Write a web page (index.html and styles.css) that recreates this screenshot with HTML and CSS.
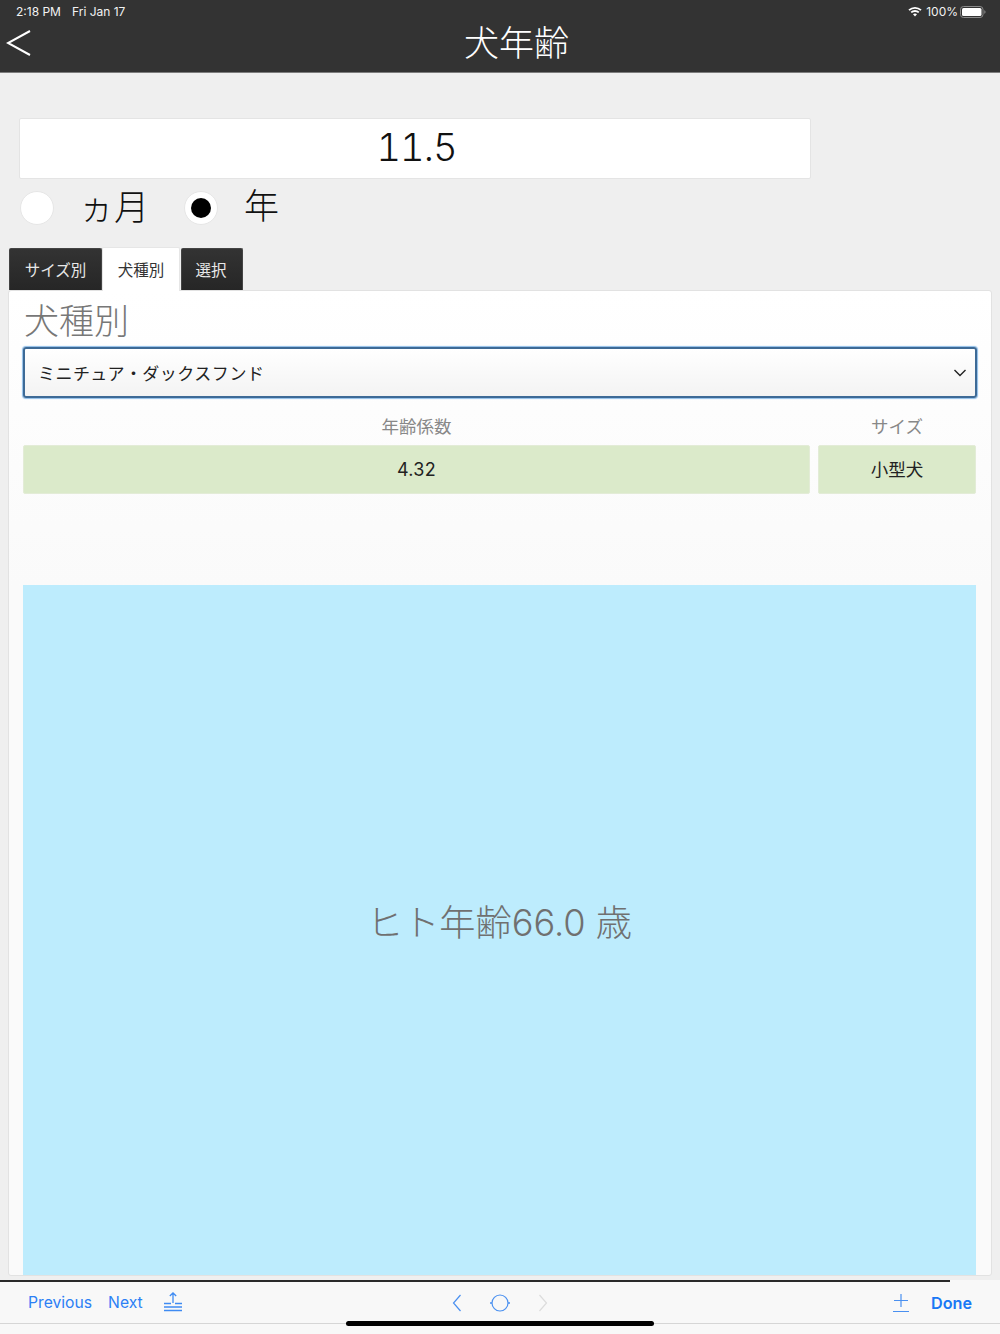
FILE: index.html
```html
<!DOCTYPE html>
<html lang="ja">
<head>
<meta charset="utf-8">
<title>犬年齢</title>
<link rel="stylesheet" href="styles.css">
</head>
<body>
<div class="screen">
  <header class="header">
    <div class="status">
      <div class="status-left"><span>2:18 PM</span><span>Fri Jan 17</span></div>
      <div class="status-right">
        <svg class="wifi" width="14" height="11" viewBox="0 0 14 11"><path d="M1 4.200C4.500 1 9.500 1 13 4.200" fill="none" stroke="#fff" stroke-width="1.800"/><path d="M3.200 6.400C5.300 4.500 8.700 4.500 10.800 6.400" fill="none" stroke="#fff" stroke-width="1.800"/><path d="M5 8.300C6.200 7.300 7.800 7.300 9 8.300L7 10.500Z" fill="#fff"/></svg>
        <span>100%</span>
        <svg class="battery" width="26" height="12" viewBox="0 0 26 12"><rect x="0.500" y="0.500" width="22.500" height="11" rx="3" fill="none" stroke="#8a8a8a"/><rect x="2" y="2" width="19.500" height="8" rx="1.500" fill="#fff"/><path d="M24.300 4.300c.9.300 1.200 1 1.200 1.700s-.3 1.400-1.200 1.700z" fill="#8a8a8a"/></svg>
      </div>
    </div>
    <div class="navbar">
      <svg class="back" width="25" height="26" viewBox="0 0 25 26"><path d="M24 1L2 13l22 12" fill="none" stroke="#fff" stroke-width="2"/></svg>
      <h1 class="title">犬年齢</h1>
    </div>
  </header>

  <main class="main">
    <div class="value-box">11.5</div>
    <div class="radios">
      <span class="radio"></span>
      <span class="radio-label radio-label-month"><span class="ka">ヵ</span>月</span>
      <span class="radio radio-on"></span>
      <span class="radio-label">年</span>
    </div>
    <nav class="tabs">
      <span class="tab tab-size">サイズ別</span>
      <span class="tab tab-active">犬種別</span>
      <span class="tab tab-select">選択</span>
    </nav>
    <section class="panel">
      <h2 class="panel-title">犬種別</h2>
      <div class="select">
        <span>ミニチュア・ダックスフンド</span>
        <svg width="14" height="8" viewBox="0 0 14 8"><path d="M1.500 1l5.500 5.500L12.500 1" fill="none" stroke="#222" stroke-width="1.400"/></svg>
      </div>
      <div class="stats">
        <div class="stat-label">年齢係数</div>
        <div class="stat-label">サイズ</div>
        <div class="stat-value stat-number">4.32</div>
        <div class="stat-value">小型犬</div>
      </div>
      <div class="result">ヒト年齢66.0 歳</div>
    </section>
  </main>

  <footer class="toolbar">
    <div class="tool-group tool-left">
      <span class="tool-link">Previous</span>
      <span class="tool-link">Next</span>
      <svg width="20" height="20" viewBox="0 0 20 20"><path d="M10 1V11M6.800 4L10 1l3.200 3M1 11.500h7M12 11.500h7M1 15h18M1 18.500h18" fill="none" stroke="#3f8bf2" stroke-width="1.300"/></svg>
    </div>
    <div class="tool-group tool-center">
      <svg width="10" height="18" viewBox="0 0 10 18"><path d="M8.500 1L1.500 9l7 8" fill="none" stroke="#4a90f0" stroke-width="1.200"/></svg>
      <svg width="22" height="18" viewBox="0 0 22 18"><circle cx="11" cy="9" r="8" fill="none" stroke="#4a90f0" stroke-width="1.200"/><path d="M1 9h2M19 9h2" stroke="#4a90f0" stroke-width="1.600"/></svg>
      <svg width="10" height="18" viewBox="0 0 10 18"><path d="M1.500 1l7 8-7 8" fill="none" stroke="#dcdcdc" stroke-width="1.200"/></svg>
    </div>
    <div class="tool-group tool-right">
      <svg width="16" height="20" viewBox="0 0 16 20"><path d="M8 1v13M1 7.500h14M0 18.500h16" fill="none" stroke="#4a90f0" stroke-width="1.200"/></svg>
      <span class="tool-done">Done</span>
    </div>
  </footer>
  <div class="home-indicator"></div>
</div>
</body>
</html>
```

FILE: styles.css
```css
* {
  box-sizing: border-box;
}

html,
body {
  margin: 0;
  padding: 0;
}

body {
  background: #efefef;
  font-family: Inter, "Noto Sans CJK JP", sans-serif;
}

.screen {
  position: relative;
  width: 1000px;
  height: 1334px;
  overflow: hidden;
  display: flex;
  flex-direction: column;
}

.header {
  height: 73px;
  flex: none;
  background: #333;
  border-bottom: 1px solid #7d7d7d;
  color: #fff;
}

.status {
  height: 23px;
  display: flex;
  justify-content: space-between;
  align-items: center;
  padding: 0 14px 0 16px;
  font-size: 12px;
  color: #f2f2f2;
}

.status-left {
  display: flex;
  gap: 11px;
}

.status-right {
  display: flex;
  align-items: center;
  gap: 4px;
}

.status-right .battery {
  margin-left: -2px;
}

.navbar {
  height: 48px;
  display: flex;
  align-items: center;
  padding-left: 6px;
  position: relative;
}

.back {
  flex: none;
  margin-top: -8px;
}

.title {
  margin: -9px 0 0 0;
  font-size: 35px;
  font-weight: 300;
  line-height: 48px;
  width: 100%;
  text-align: center;
  padding-left: 2px;
}

.main {
  flex: 1;
  min-height: 0;
  padding: 45px 8px 0;
  display: flex;
  flex-direction: column;
}

.value-box {
  width: 792px;
  height: 61px;
  margin-left: 11px;
  padding: 0 0 4px 3px;
  background: #fff;
  border: 1px solid #e4e4e4;
  border-radius: 2px;
  font-size: 38px;
  font-weight: 300;
  font-feature-settings: "tnum";
  color: #111;
  display: flex;
  align-items: center;
  justify-content: center;
  letter-spacing: -1px;
}

.radios {
  display: flex;
  align-items: center;
  height: 35px;
  margin: 11px 0 0 12px;
}

.radio {
  width: 34px;
  height: 34px;
  border-radius: 50%;
  background: #fff;
  border: 1px solid #e6e6e6;
  flex: none;
  display: flex;
  align-items: center;
  justify-content: center;
}

.radio-on::after {
  content: "";
  width: 20px;
  height: 20px;
  border-radius: 50%;
  background: #000;
}

.radio-label {
  font-size: 35px;
  font-weight: 300;
  color: #111;
  line-height: 35px;
  margin-top: -3px;
  margin-left: 26px;
}

.radio-label-month {
  width: 105px;
  margin-top: -1px;
  margin-left: 25px;
  white-space: nowrap;
}

.ka {
  font-size: 35px;
}

.tabs {
  display: flex;
  height: 42px;
  margin: 23px 0 0 1px;
  align-items: flex-end;
  position: relative;
  z-index: 1;
}

.tab {
  height: 42px;
  padding-bottom: 1px;
  background: linear-gradient(#333, #262626);
  color: #e8e8e8;
  font-size: 15.500px;
  display: flex;
  align-items: center;
  justify-content: center;
  border-radius: 2px 2px 0 0;
  border: 1px solid #444;
  border-bottom: 0;
}

.tab-size {
  width: 93px;
}

.tab-active {
  width: 78px;
  height: 44px;
  margin: 0 1px -1px 0;
  background: #fff;
  color: #333;
  border: 1px solid #e6e6e6;
  border-bottom: 0;
}

.tab-select {
  width: 62px;
  padding-right: 2px;
}

.panel {
  height: 986px;
  background: linear-gradient(#fff, #fafafa 30%);
  border: 1px solid #e2e2e2;
  border-radius: 3px;
  padding: 0 15px 0 14px;
  display: flex;
  flex-direction: column;
  overflow: hidden;
}

.panel-title {
  margin: 9px 0 0 1px;
  height: 47px;
  font-size: 35px;
  font-weight: 300;
  line-height: 42px;
  color: #777;
}

.select {
  height: 51px;
  margin-right: -1px;
  border: 2px solid #3d6a96;
  border-radius: 3px;
  box-shadow: 0 0 1px 1px #8ebde8;
  background: linear-gradient(#fff, #f3f3f3);
  display: flex;
  align-items: center;
  justify-content: space-between;
  padding: 0 8px 0 13px;
  font-size: 17px;
  color: #222;
  letter-spacing: 0.450px;
}

.stats {
  display: grid;
  grid-template-columns: 787px 158px;
  column-gap: 8px;
  grid-template-rows: 47px 49px;
}

.stat-label {
  display: flex;
  align-items: center;
  justify-content: center;
  padding-top: 7px;
  font-size: 17.500px;
  color: #888;
}

.stat-value {
  display: flex;
  align-items: center;
  justify-content: center;
  background: #dbeaca;
  border: 1px solid #e3ecd7;
  border-radius: 2px;
  font-size: 17.500px;
  line-height: 20px;
  color: #222;
}

.stat-number {
  font-size: 18px;
  letter-spacing: 0.300px;
}

.result {
  flex: 1;
  margin-top: 91px;
  background: #bdecfd;
  color: #707070;
  font-size: 36.200px;
  font-weight: 300;
  display: flex;
  align-items: center;
  justify-content: center;
  padding-bottom: 20px;
}

.toolbar {
  height: 54px;
  flex: none;
  margin-top: 4px;
  background: #f8f8f8;
  display: grid;
  grid-template-columns: 1fr auto 1fr;
  align-items: center;
  padding: 0 28px 9px;
  position: relative;
  box-shadow: inset 0 -10px 0 #f8f8f8, inset 0 -11px 0 #d6d6d6;
}

.toolbar::before {
  content: "";
  position: absolute;
  top: 0;
  left: 0;
  width: 950px;
  height: 2px;
  background: #2a2a2a;
}

.tool-group {
  display: flex;
  align-items: center;
}

.tool-left {
  gap: 16px;
}

.tool-left svg {
  margin-left: 4px;
  margin-top: -2px;
}

.tool-center {
  gap: 27px;
}

.tool-right {
  justify-content: flex-end;
  gap: 22px;
}

.tool-link {
  font-size: 15.700px;
  color: #2c80f5;
}

.tool-done {
  font-size: 16.200px;
  font-weight: 600;
  color: #1a78f5;
}

.home-indicator {
  position: absolute;
  left: 346px;
  top: 1321px;
  width: 308px;
  height: 5px;
  border-radius: 3px;
  background: #000;
}
```
